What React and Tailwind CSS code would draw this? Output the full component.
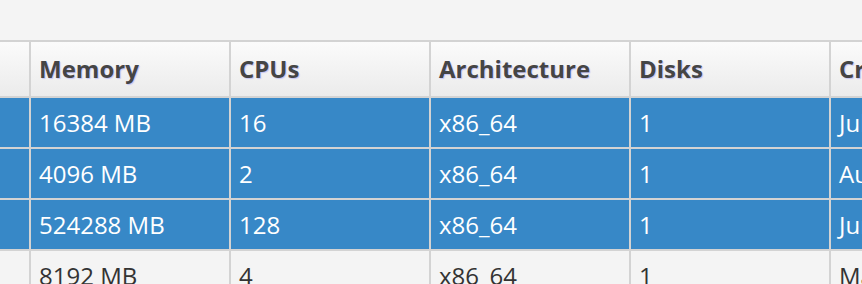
import React from "react";

const columns = ["", "Memory", "CPUs", "Architecture", "Disks", "Created"];

const rows = [
  { selected: true, cells: ["", "16384 MB", "16", "x86_64", "1", "Jul 14, 2023"] },
  { selected: true, cells: ["", "4096 MB", "2", "x86_64", "1", "Aug 2, 2023"] },
  { selected: true, cells: ["", "524288 MB", "128", "x86_64", "1", "Jun 21, 2023"] },
  { selected: false, cells: ["", "8192 MB", "4", "x86_64", "1", "May 9, 2023"] },
];

const grid =
  "grid grid-cols-[29px_198px_198px_198px_198px_198px] gap-x-[2px] w-max";

const App = () => {
  return (
    <div
      className="w-[862px] h-[284px] overflow-hidden bg-[#f4f4f4] text-[24px]"
      style={{ fontFamily: '"Open Sans", "Noto Sans", sans-serif' }}
    >
      {/* toolbar strip above the table */}
      <div className="h-[40px] bg-[#f4f4f4]"></div>

      {/* table, scrolled sideways so the first column is cut */}
      <div className="flex flex-col gap-y-[2px] pt-[2px] bg-[#d3d3d3] w-max">
        {/* header */}
        <div className={`${grid} bg-[#d3d3d3]`}>
          {columns.map((col, i) => (
            <div
              key={i}
              className="h-[54px] flex items-center px-[8px] leading-[36px] font-bold text-[#454545] bg-gradient-to-b from-[#fbfbfb] to-[#ebebeb] [text-shadow:1px_1px_1px_#c4c4f4] whitespace-nowrap overflow-hidden"
            >
              {col}
            </div>
          ))}
        </div>

        {rows.map((row, r) => (
          <div key={r} className={`${grid} bg-[#d3d3d3]`}>
            {row.cells.map((cell, i) => (
              <div
                key={i}
                className={`h-[49px] flex items-center px-[8px] leading-[36px] whitespace-nowrap overflow-hidden ${
                  row.selected
                    ? "bg-[#3788c7] text-white"
                    : "bg-[#f4f4f4] text-[#333333]"
                }`}
              >
                {cell}
              </div>
            ))}
          </div>
        ))}
      </div>
    </div>
  );
};

export default App;
